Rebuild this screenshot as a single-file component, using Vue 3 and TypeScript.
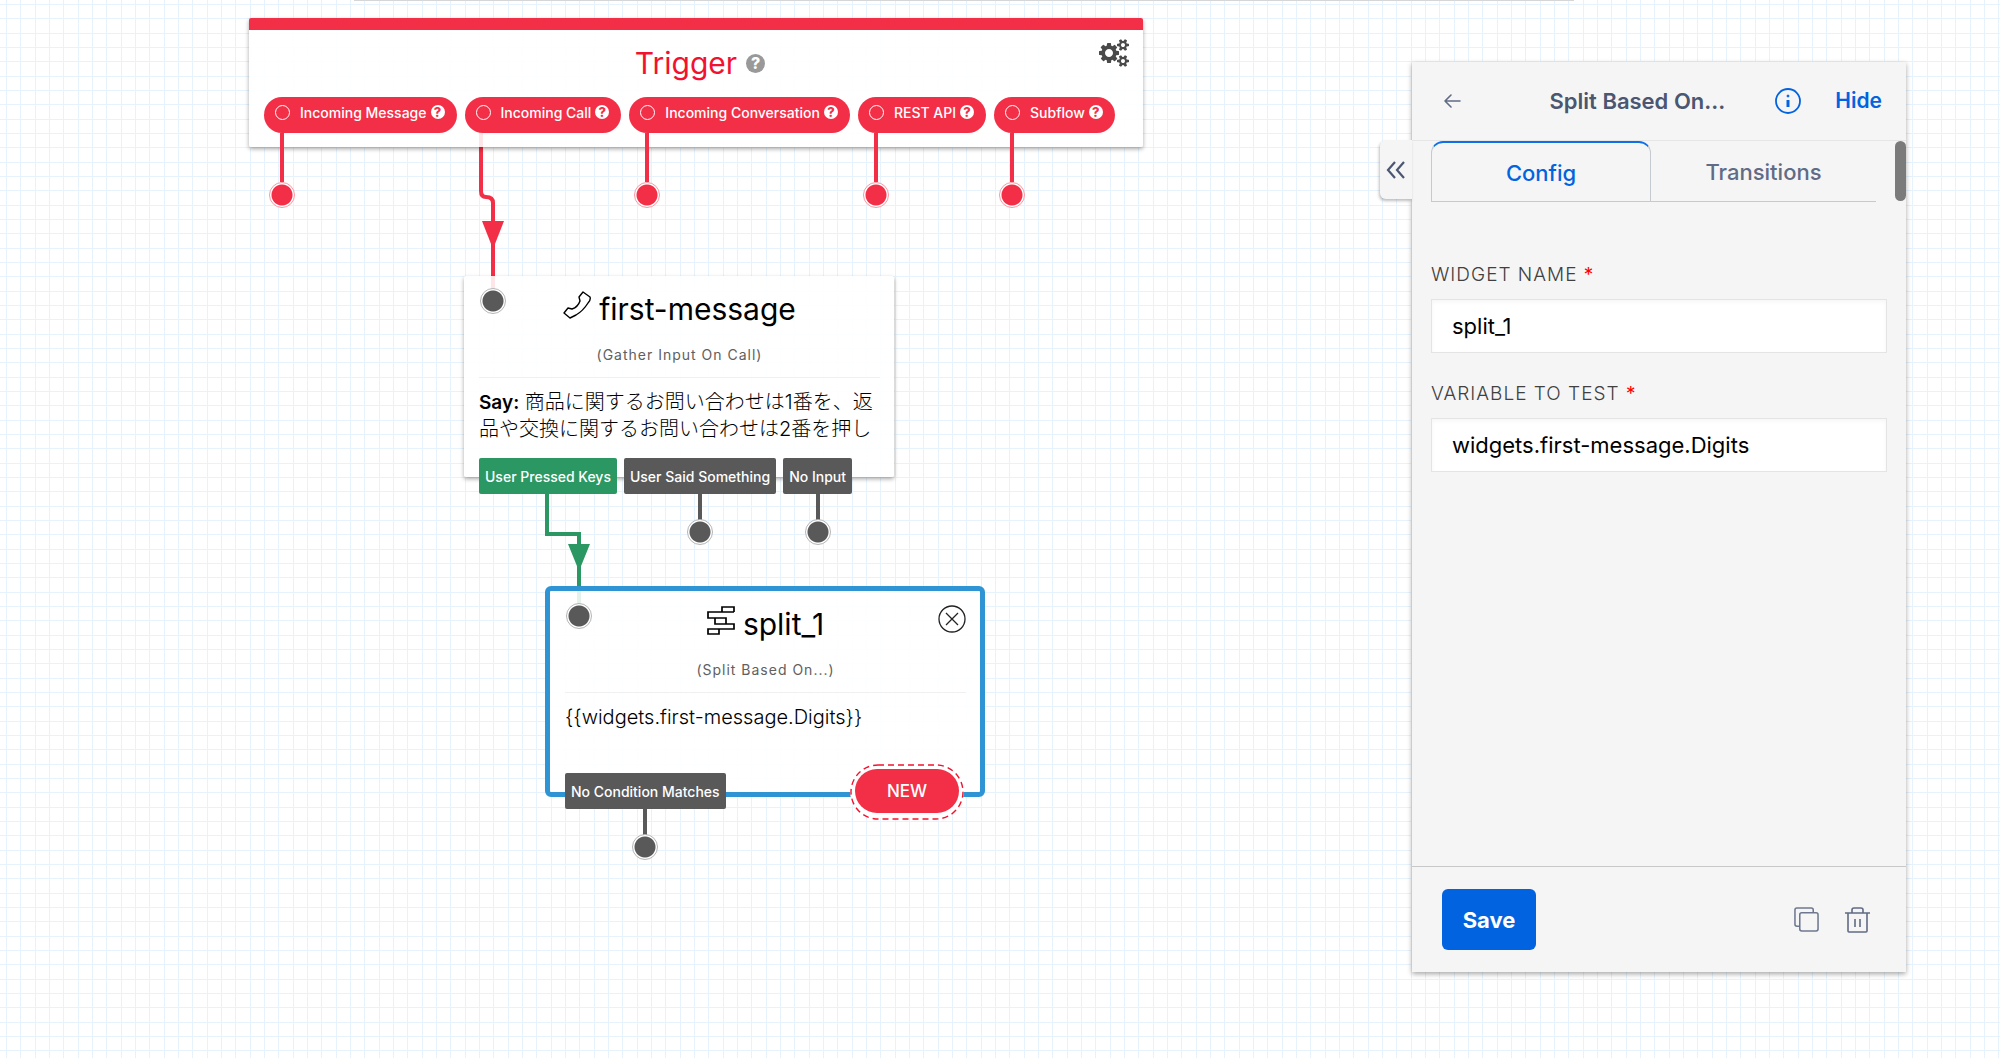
<script setup lang="ts">
import { ref } from 'vue'

interface TriggerEvent {
  label: string
  connected: boolean
}

interface Outlet {
  label: string
  connected: boolean
}

const events: TriggerEvent[] = [
  { label: 'Incoming Message', connected: false },
  { label: 'Incoming Call', connected: true },
  { label: 'Incoming Conversation', connected: false },
  { label: 'REST API', connected: false },
  { label: 'Subflow', connected: false },
]

const gatherOutlets: Outlet[] = [
  { label: 'User Pressed Keys', connected: true },
  { label: 'User Said Something', connected: false },
  { label: 'No Input', connected: false },
]

const splitOutlets: Outlet[] = [{ label: 'No Condition Matches', connected: false }]

const sayText = '商品に関するお問い合わせは1番を、返品や交換に関するお問い合わせは2番を押し'
const splitExpression = '{{widgets.first-message.Digits}}'

const widgetName = ref('split_1')
const variable = ref('widgets.first-message.Digits')
</script>

<template>
  <main class="canvas">
    <div class="toolbar-edge"></div>

    <svg class="wires" aria-hidden="true">
      <g class="wire red">
        <path d="M481 133V191Q481 197 486 197Q493 197 493 203V290" />
        <polygon points="482,221 504,221 493,249" />
      </g>
      <g class="wire green">
        <path d="M547 490V534H579V606" />
        <polygon points="568,544 590,544 579,571" />
      </g>
    </svg>

    <section class="node trigger">
      <header class="trigger-head">
        <h2>Trigger</h2>
        <span class="help help-grey">?</span>
        <button class="gears" type="button" aria-label="Trigger settings">
          <svg viewBox="0 0 1920 1792" width="30" height="28">
            <path
              fill="#4a4a4a"
              d="M896 896q0-106-75-181t-181-75-181 75-75 181 75 181 181 75 181-75 75-181zm768 512q0-52-38-90t-90-38-90 38-38 90q0 53 37.500 90.500t90.500 37.500 90.500-37.500 37.500-90.500zm0-1024q0-52-38-90t-90-38-90 38-38 90q0 53 37.500 90.500t90.500 37.500 90.500-37.500 37.500-90.500zm-384 421v185q0 10-7 19.500t-16 10.500l-155 24q-11 35-32 76 34 48 90 115 7 11 7 20 0 12-7 19-23 30-82.500 89.500t-78.500 59.500q-11 0-21-7l-115-90q-37 19-77 31-11 108-23 155-7 24-30 24h-186q-11 0-20-7.500t-10-17.500l-23-153q-34-10-75-31l-118 89q-7 7-20 7-11 0-21-8-144-133-144-160 0-9 7-19 10-14 41-53t47-61q-23-44-35-82l-152-24q-10-1-17-9.500t-7-19.500v-185q0-10 7-19.500t16-10.500l155-24q11-35 32-76-34-48-90-115-7-11-7-20 0-12 7-20 22-30 82-89t79-59q11 0 21 7l115 90q34-18 77-32 11-108 23-154 7-24 30-24h186q11 0 20 7.500t10 17.500l23 153q34 10 75 31l118-89q8-7 20-7 11 0 21 8 144 133 144 160 0 8-7 19-12 16-42 54t-45 60q23 48 34 82l152 23q10 2 17 10.500t7 19.500zm640 533v140q0 16-149 31-12 27-30 52 51 113 51 138 0 4-4 7-122 71-124 71-8 0-46-47t-52-68q-20 2-30 2t-30-2q-14 21-52 68t-46 47q-2 0-124-71-4-3-4-7 0-25 51-138-18-25-30-52-149-15-149-31v-140q0-16 149-31 13-29 30-52-51-113-51-138 0-4 4-7 4-2 35-20t59-34 30-16q8 0 46 46.500t52 67.500q20-2 30-2t30 2q51-71 92-112l6-2q4 0 124 70 4 3 4 7 0 25-51 138 17 23 30 52 149 15 149 31zm0-1024v140q0 16-149 31-12 27-30 52 51 113 51 138 0 4-4 7-122 71-124 71-8 0-46-47t-52-68q-20 2-30 2t-30-2q-14 21-52 68t-46 47q-2 0-124-71-4-3-4-7 0-25 51-138-18-25-30-52-149-15-149-31v-140q0-16 149-31 13-29 30-52-51-113-51-138 0-4 4-7 4-2 35-20t59-34 30-16q8 0 46 46.500t52 67.500q20-2 30-2t30 2q51-71 92-112l6-2q4 0 124 70 4 3 4 7 0 25-51 138 17 23 30 52 149 15 149 31z"
            />
          </svg>
        </button>
      </header>
      <div class="events">
        <div v-for="event in events" :key="event.label" class="pill">
          <span class="pill-ring"></span>
          <span class="pill-label">{{ event.label }}</span>
          <span class="help">?</span>
          <span v-if="!event.connected" class="stem"></span>
          <span v-if="!event.connected" class="dot stem-dot"></span>
        </div>
      </div>
    </section>

    <section class="node gather">
      <span class="dot inlet"></span>
      <header class="node-head">
        <svg class="node-icon" viewBox="0 0 28 28" width="28" height="28" fill="none" stroke="#000" stroke-width="1.400" stroke-linejoin="round">
          <path d="M16 6L20 1L27 6Q28 9 25 12Q20 20 13 24L7 27L1 22L5 17L9 18Q15 16 17 10Z" />
        </svg>
        <h2>first-message</h2>
      </header>
      <p class="kind">(Gather Input On Call)</p>
      <p class="detail"><b>Say:</b> {{ sayText }}</p>
      <div class="outlets">
        <div v-for="outlet in gatherOutlets" :key="outlet.label" class="outlet" :class="{ matched: outlet.connected }">
          {{ outlet.label }}
          <span v-if="!outlet.connected" class="stem"></span>
          <span v-if="!outlet.connected" class="dot stem-dot"></span>
        </div>
      </div>
    </section>

    <section class="node split">
      <span class="dot inlet"></span>
      <button class="close" type="button" aria-label="Remove widget">
        <svg viewBox="0 0 28 28" width="28" height="28" fill="none" stroke="#222">
          <circle cx="14" cy="14" r="13" stroke-width="1.300" />
          <path d="M8 8L20 20M20 8L8 20" stroke-width="1.300" />
        </svg>
      </button>
      <header class="node-head">
        <svg class="node-icon" viewBox="0 0 28 29" width="28" height="29" fill="none" stroke="#000" stroke-width="1.700">
          <path d="M27 6H1V12H19V18M8 12V18H27V23H1V28H12V23M15 6V1H27V6" />
        </svg>
        <h2>split_1</h2>
      </header>
      <p class="kind">(Split Based On...)</p>
      <p class="detail">{{ splitExpression }}</p>
      <div class="outlets">
        <div v-for="outlet in splitOutlets" :key="outlet.label" class="outlet">
          {{ outlet.label }}
          <span class="stem"></span>
          <span class="dot stem-dot"></span>
        </div>
      </div>
      <button class="new" type="button">
        NEW
        <svg class="new-outline" viewBox="0 0 114 56" width="114" height="56" fill="none" aria-hidden="true">
          <rect x="1" y="1" width="112" height="54" rx="27" stroke="#f2122f" stroke-width="1.400" stroke-dasharray="6 4" />
        </svg>
      </button>
    </section>

    <aside class="panel">
      <button class="collapse" type="button" aria-label="Expand panel">
        <svg viewBox="0 0 20 18" width="20" height="18" fill="none" stroke="#4b5671" stroke-width="2.200">
          <path d="M9 1L2 9L9 17M18 1L11 9L18 17" />
        </svg>
      </button>
      <header class="panel-head">
        <button class="plain" type="button" aria-label="Back">
          <svg viewBox="0 0 18 14" width="18" height="14" fill="none" stroke="#606b85" stroke-width="1.600" stroke-linecap="round" stroke-linejoin="round">
            <path d="M16 7H1M7 1L1 7L7 13" />
          </svg>
        </button>
        <h1>Split Based On...</h1>
        <button class="plain info" type="button" aria-label="Widget information">
          <svg viewBox="0 0 26 26" width="26" height="26" fill="none" stroke="#0263e0">
            <circle cx="13" cy="13" r="12" stroke-width="1.800" />
            <path d="M13 12V19" stroke-width="3" />
            <circle cx="13" cy="8" r="1" stroke-width="1" fill="#0263e0" />
          </svg>
        </button>
        <button class="plain hide" type="button">Hide</button>
      </header>
      <div class="panel-body">
        <span class="thumb"></span>
        <nav class="tabs" role="tablist">
          <button class="tab active" type="button" role="tab" aria-selected="true">Config</button>
          <button class="tab" type="button" role="tab" aria-selected="false">Transitions</button>
        </nav>
        <div class="field">
          <label for="widget-name">WIDGET NAME <i>*</i></label>
          <input id="widget-name" v-model="widgetName" type="text" />
        </div>
        <div class="field">
          <label for="variable">VARIABLE TO TEST <i>*</i></label>
          <input id="variable" v-model="variable" type="text" />
        </div>
      </div>
      <footer class="panel-foot">
        <button class="save" type="button">Save</button>
        <button class="plain" type="button" aria-label="Duplicate widget">
          <svg viewBox="0 0 26 26" width="25" height="25" fill="none" stroke="#6d7890" stroke-width="1.600">
            <path d="M6 20H3Q1 20 1 18V3Q1 1 3 1H18Q20 1 20 3V6" />
            <rect x="6" y="6" width="19" height="19" rx="2" />
          </svg>
        </button>
        <button class="plain" type="button" aria-label="Delete widget">
          <svg viewBox="0 0 25 26" width="25" height="26" fill="none" stroke="#606b85" stroke-width="1.600">
            <path d="M0 6H25M3 6V24Q3 25 4 25H21Q22 25 22 24V6M7 6V3Q7 1 9 1H16Q18 1 18 3V6M10 12V20M15 12V20" />
          </svg>
        </button>
      </footer>
    </aside>
  </main>
</template>

<style>
html,
body {
  background: #fff;
}
</style>

<style scoped>
* {
  box-sizing: border-box;
}

h1,
h2,
p {
  margin: 0;
}

button {
  font-family: inherit;
  cursor: pointer;
}

.canvas {
  --grid: #e6f3fd;
  position: relative;
  min-height: 100vh;
  overflow: hidden;
  color: #000;
  font-family: Inter, 'Noto Sans CJK JP', sans-serif;
  background:
    linear-gradient(90deg, var(--grid) 1px, transparent 1px 14px, var(--grid) 14px 15px, transparent 15px 29px, var(--grid) 29px 30px, transparent 30px) 6px 4px / 43px 43px,
    linear-gradient(var(--grid) 1px, transparent 1px 14px, var(--grid) 14px 15px, transparent 15px 29px, var(--grid) 29px 30px, transparent 30px) 6px 4px / 43px 43px,
    #fff;
}

.toolbar-edge {
  width: 61%;
  height: 1px;
  margin-left: 354px;
  background: #d4d6d8;
}

.wires {
  position: absolute;
  inset: 0;
  width: 100%;
  height: 100%;
}

.wire path {
  fill: none;
  stroke-width: 4px;
}

.wire.red {
  fill: #f22f46;
  stroke: #f22f46;
}

.wire.green {
  fill: #2b9762;
  stroke: #2b9762;
}

.wire polygon {
  stroke: none;
}

.node {
  position: absolute;
  border-radius: 2px;
  background: rgba(255, 255, 255, 0.88);
  box-shadow: 0 2px 4px rgba(0, 0, 0, 0.35);
}

.trigger {
  top: 18px;
  left: 249px;
  width: 894px;
  padding: 19px 15px 14px;
  border-top: 12px solid #f22f46;
}

.trigger-head {
  display: flex;
  align-items: center;
  justify-content: center;
  gap: 9px;
  height: 28px;
  margin-bottom: 20px;
  padding-left: 8px;
}

.trigger-head h2 {
  color: #f2122f;
}

h2 {
  font-size: 30px;
  font-weight: 400;
  line-height: 36px;
}

.gears {
  position: absolute;
  top: 9px;
  right: 14px;
  padding: 0;
  border: 0;
  background: none;
  line-height: 0;
}

.help {
  display: flex;
  align-items: center;
  justify-content: center;
  flex: none;
  width: 14px;
  height: 14px;
  border-radius: 50%;
  background: #fff;
  color: #f22f46;
  font-size: 13px;
  font-weight: 800;
  line-height: 14px;
}

.help-grey {
  width: 19px;
  height: 19px;
  background: #999;
  color: #fff;
  font-size: 16px;
}

.events {
  display: flex;
  gap: 8px;
}

.pill {
  position: relative;
  display: flex;
  align-items: center;
  height: 36px;
  padding: 0 12px 6px 11px;
  border-radius: 18px;
  background: #f22f46;
  color: #fff;
  font-size: 14px;
}

.pill-ring {
  width: 15px;
  height: 15px;
  margin-right: 10px;
  border: 1px solid #fff;
  border-radius: 50%;
}

.pill-label {
  margin-right: 4px;
  font-weight: 500;
  white-space: nowrap;
}

.dot {
  position: absolute;
  width: 26px;
  height: 26px;
  border: 1px solid #b5b5b5;
  border-radius: 50%;
  background: radial-gradient(circle, #595959 10px, #fff 11px);
}

.stem {
  position: absolute;
  top: 100%;
  left: 50%;
  width: 4px;
  height: 28px;
  margin-left: -2px;
  background: #595959;
}

.stem-dot {
  top: calc(100% + 25px);
  left: 50%;
  margin-left: -13px;
}

.pill .stem {
  left: 18px;
  height: 49px;
  background: #f22f46;
}

.pill .stem-dot {
  top: calc(100% + 49px);
  left: 18px;
  border-color: #f79aa5;
  background: radial-gradient(circle, #f22f46 10px, #fff 11px);
}

.gather {
  top: 276px;
  left: 464px;
  width: 430px;
  height: 201px;
  padding: 15px 14px 0 15px;
}

.split {
  top: 586px;
  left: 545px;
  width: 440px;
  height: 211px;
  padding: 15px 14px 0 15px;
  border: 5px solid #2f94d4;
  border-radius: 6px;
  box-shadow: none;
}

.inlet {
  top: 12px;
  left: 16px;
}

.node-head {
  display: flex;
  justify-content: center;
  gap: 8px;
  height: 36px;
}

.kind {
  margin-top: 17px;
  padding-bottom: 12px;
  border-bottom: 1px solid #f0f0f0;
  color: #606060;
  font-size: 14px;
  line-height: 21px;
  letter-spacing: 1px;
  text-align: center;
}

.detail {
  padding-top: 11px;
  font-size: 20px;
  font-weight: 300;
  line-height: 27px;
}

.detail b {
  font-size: 19px;
  font-weight: 600;
}

.outlets {
  position: absolute;
  bottom: -17px;
  left: 15px;
  display: flex;
  gap: 7px;
}

.outlet {
  position: relative;
  padding: 2px 6px 0;
  border-radius: 2px;
  background: #595959;
  color: #fff;
  font-size: 14px;
  font-weight: 500;
  line-height: 34px;
  white-space: nowrap;
}

.outlet.matched {
  background: #2b9762;
}

.close {
  position: absolute;
  top: 14px;
  right: 14px;
  padding: 0;
  border: 0;
  background: none;
  line-height: 0;
}

.new {
  position: absolute;
  right: 21px;
  bottom: -21px;
  width: 104px;
  height: 44px;
  border: 0;
  border-radius: 22px;
  background: #f22f46;
  box-shadow: 0 0 0 5px #fff;
  color: #fff;
  font-size: 17px;
  font-weight: 500;
}

.new-outline {
  position: absolute;
  top: -5px;
  left: -5px;
}

.panel {
  position: absolute;
  top: 62px;
  right: 94px;
  bottom: 86px;
  display: flex;
  flex-direction: column;
  width: 494px;
  background: #f5f5f5;
  box-shadow: 0 2px 5px rgba(0, 0, 0, 0.35);
}

.collapse {
  position: absolute;
  top: 78px;
  left: -32px;
  width: 32px;
  height: 59px;
  padding: 0 0 0 6px;
  border: 0;
  border-radius: 6px 0 0 6px;
  background: #f5f5f5;
  box-shadow: -1px 2px 3px rgba(0, 0, 0, 0.25);
  line-height: 0;
  text-align: left;
}

.plain {
  padding: 0;
  border: 0;
  background: none;
  line-height: 0;
}

.panel-head {
  display: flex;
  align-items: center;
  flex: none;
  height: 79px;
  padding: 0 24px 0 32px;
  border-bottom: 1px solid #e6e6e6;
}

.panel-head h1 {
  flex: 1;
  margin-right: 50px;
  color: #4b5671;
  font-size: 22px;
  font-weight: 600;
  line-height: 28px;
  text-align: right;
}

.info {
  margin-right: 34px;
}

.hide {
  color: #0263e0;
  font-size: 21px;
  font-weight: 600;
  line-height: 28px;
}

.panel-body {
  position: relative;
  flex: 1;
  padding: 0 19px;
}

.thumb {
  position: absolute;
  top: 0;
  right: 0;
  width: 11px;
  height: 60px;
  border-radius: 6px;
  background: #7b7b7b;
}

.tabs {
  display: flex;
  height: 61px;
  margin: 0 11px 59px 0;
  border-bottom: 1px solid #c5c9d0;
}

.tab {
  flex: 1;
  padding: 2px 0 0;
  border: 0;
  background: none;
  color: #606b85;
  font-size: 22px;
  font-weight: 500;
}

.tab.active {
  flex: 0 0 220px;
  border: 1px solid #c5c9d0;
  border-top: 2px solid #0f6fe8;
  border-bottom: 0;
  border-radius: 12px 12px 0 0;
  color: #0263e0;
}

.field {
  margin-bottom: 27px;
}

.field label {
  display: block;
  margin-bottom: 10px;
  color: #404040;
  font-size: 19px;
  font-weight: 300;
  line-height: 28px;
  letter-spacing: 1px;
}

.field i {
  color: #f00;
  font-style: normal;
  font-weight: 400;
}

.field input {
  display: block;
  width: 100%;
  height: 54px;
  padding: 0 20px;
  border: 1px solid #e4e4e4;
  background: #fff;
  box-shadow: inset 0 2px 4px rgba(0, 0, 0, 0.04);
  color: #000;
  font-family: inherit;
  font-size: 22px;
}

.panel-foot {
  display: flex;
  align-items: center;
  flex: none;
  gap: 26px;
  height: 106px;
  padding: 0 36px 0 30px;
  border-top: 1px solid #c8c8c8;
}

.save {
  width: 94px;
  height: 61px;
  margin-right: auto;
  border: 0;
  border-radius: 6px;
  background: #0263e0;
  color: #fff;
  font-size: 22px;
  font-weight: 700;
}
</style>
